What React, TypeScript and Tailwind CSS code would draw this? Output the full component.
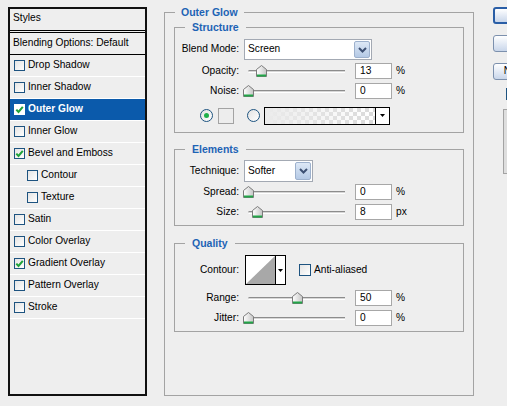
type StyleItem = {
  name: string
  checked?: boolean
  selected?: boolean
  indent?: boolean
}

const styleItems: StyleItem[] = [
  { name: "Drop Shadow" },
  { name: "Inner Shadow" },
  { name: "Outer Glow", checked: true, selected: true },
  { name: "Inner Glow" },
  { name: "Bevel and Emboss", checked: true },
  { name: "Contour", indent: true },
  { name: "Texture", indent: true },
  { name: "Satin" },
  { name: "Color Overlay" },
  { name: "Gradient Overlay", checked: true },
  { name: "Pattern Overlay" },
  { name: "Stroke" },
]

function Check({ checked, selected, big }: { checked?: boolean; selected?: boolean; big?: boolean }) {
  return (
    <span
      className={`flex shrink-0 items-center justify-center border ${big ? "h-[12px] w-[12px]" : "h-[11px] w-[11px]"} ${
        selected ? "border-white bg-white" : "border-[#1d5380] bg-gradient-to-br from-[#e4e4e4] to-white"
      }`}
    >
      {checked && (
        <svg width="9" height="9" viewBox="0 0 9 9">
          <path d="M1.3 4.6 L3.5 7 L7.8 1.8" fill="none" stroke="#1fa33a" strokeWidth="2" />
        </svg>
      )}
    </span>
  )
}

function Radio({ on }: { on?: boolean }) {
  return (
    <span className="flex h-[13px] w-[13px] shrink-0 items-center justify-center rounded-full border border-[#1d5380] bg-gradient-to-br from-[#e2e2e2] to-white">
      {on && <span className="h-[5px] w-[5px] rounded-full bg-[#1fb04a]" />}
    </span>
  )
}

function Label({ children }: { children: React.ReactNode }) {
  return <span className="w-[64px] shrink-0 text-right">{children}</span>
}

function Thumb() {
  return (
    <svg width="11" height="12" viewBox="0 0 11 12">
      <defs>
        <linearGradient id="thumbFill" x1="0" y1="0" x2="1" y2="0">
          <stop offset="0" stopColor="#ffffff" />
          <stop offset="1" stopColor="#c6c6c6" />
        </linearGradient>
      </defs>
      <path d="M0.5 4.5 L5.5 0.5 L10.5 4.5 V11.5 H0.5 Z" fill="url(#thumbFill)" stroke="#7b7b7b" />
      <rect x="1" y="9.5" width="9" height="2" fill="#22a548" />
    </svg>
  )
}

// pos = thumb left offset in px inside the slider box
function Slider({ pos }: { pos: number }) {
  return (
    <div className="relative ml-[5px] flex h-full w-[104px] shrink-0 items-center pl-[4px] pr-[3px]">
      <div className="h-[3px] flex-1 rounded-l-full border-t border-b border-t-[#8c8c8c] border-b-white bg-[#d6d6d6]" />
      <div className="absolute top-1/2 -translate-y-1/2" style={{ left: pos }}>
        <Thumb />
      </div>
    </div>
  )
}

function NumBox({ value, unit }: { value: string; unit: string }) {
  return (
    <>
      <div className="ml-[7px] flex h-[16px] w-[37px] shrink-0 items-center border border-[#a7a7a7] bg-white pl-[4px]">
        {value}
      </div>
      <span className="ml-[4px]">{unit}</span>
    </>
  )
}

function SliderRow({ label, pos, value, unit, className }: { label: string; pos: number; value: string; unit: string; className: string }) {
  return (
    <div className={`flex h-[16px] items-center ${className}`}>
      <Label>{label}</Label>
      <Slider pos={pos} />
      <NumBox value={value} unit={unit} />
    </div>
  )
}

function Chevron() {
  return (
    <svg width="9" height="6" viewBox="0 0 9 6">
      <path d="M1 1 L4.5 4.5 L8 1" fill="none" stroke="#3d5073" strokeWidth="2" />
    </svg>
  )
}

function Arrow() {
  return (
    <svg width="5" height="3" viewBox="0 0 5 3">
      <path d="M0 0 H5 L2.5 3 Z" fill="#000" />
    </svg>
  )
}

function Select({ value, className }: { value: string; className: string }) {
  return (
    <div className={`ml-[5px] flex shrink-0 border border-[#a3a9b3] bg-white ${className}`}>
      <span className="flex flex-1 items-center pl-[3px]">{value}</span>
      <span className="m-[1px] flex w-[16px] items-center justify-center rounded-[2px] border border-[#9db1cd] bg-gradient-to-b from-[#dde8f6] to-[#b4c9e5]">
        <Chevron />
      </span>
    </div>
  )
}

function Group({ title, className, children }: { title: string; className: string; children: React.ReactNode }) {
  return (
    <fieldset className={`border border-[#a3a3a3] ${className}`}>
      <legend className="ml-[10px] px-[7px] text-[10.5px] font-bold leading-[14px] text-[#1d63b5]">{title}</legend>
      {children}
    </fieldset>
  )
}

function Btn({ children, primary, className }: { children: React.ReactNode; primary?: boolean; className?: string }) {
  return (
    <div
      className={`flex h-[17px] w-[76px] items-center justify-center rounded-[3px] bg-gradient-to-b from-white to-[#c9d6ea] ${
        primary ? "border-2 border-[#2a5ea6]" : "border border-[#7c90ad]"
      } ${className ?? ""}`}
    >
      {children}
    </div>
  )
}

export default function App() {
  return (
    <div className="flex h-[406px] w-[507px] items-start overflow-hidden bg-[#eeeeee] pl-[8px] pt-[5px] font-['Liberation_Sans',Arial,sans-serif] text-[10.2px] leading-none text-black">
      {/* styles list */}
      <div className="mt-[2px] h-[389px] w-[139px] shrink-0 overflow-hidden border-2 border-[#111]">
        <div className="flex h-[22px] items-center border-b border-black pl-[3px] pb-[2px]">Styles</div>
        <div className="mt-[1px] flex h-[23px] items-center border-y border-black pl-[3px]">Blending Options: Default</div>
        {styleItems.map((s) => (
          <div
            key={s.name}
            className={`flex h-[22px] items-center border-b border-white ${s.indent ? "pl-[17px]" : "pl-[4px]"} ${
              s.selected ? "bg-[#0b5aab] font-bold text-white" : ""
            }`}
          >
            <Check checked={s.checked} selected={s.selected} />
            <span className="ml-[3px]">{s.name}</span>
          </div>
        ))}
      </div>

      {/* Outer Glow panel */}
      <fieldset className="ml-[17px] w-[310px] shrink-0 border border-[#a3a3a3]">
        <legend className="ml-[10px] px-[6px] text-[10.5px] font-bold leading-[14px] text-[#1d63b5]">Outer Glow</legend>
        <div className="px-[9px] pb-[63px]">
          <Group title="Structure" className="mt-[1px]">
            <div className="pb-[8px] pt-[5px]">
              <div className="flex h-[21px] items-center">
                <Label>Blend Mode:</Label>
                <Select value="Screen" className="h-[21px] w-[128px]" />
              </div>
              <SliderRow label="Opacity:" pos={12} value="13" unit="%" className="mt-[3px]" />
              <SliderRow label="Noise:" pos={-1} value="0" unit="%" className="mt-[4px]" />
              <div className="mt-[8px] flex h-[17px] items-center pl-[25px]">
                <Radio on />
                <span className="ml-[5px] h-[16px] w-[16px] border border-[#a3a3a3] bg-[#ededed]" />
                <span className="ml-[13px]">
                  <Radio />
                </span>
                <div className="ml-[4px] flex h-[18px] w-[126px] border border-black bg-white">
                  <div className="flex-1 bg-[repeating-conic-gradient(#dadada_0%_25%,#ffffff_0%_50%)] bg-[length:8px_8px]">
                    <div className="h-full bg-gradient-to-r from-[#ebebeb] via-[#ebebeb]/50 to-transparent" />
                  </div>
                  <div className="flex w-[14px] items-center justify-center border-l border-black">
                    <Arrow />
                  </div>
                </div>
              </div>
            </div>
          </Group>

          <Group title="Elements" className="mt-[9px]">
            <div className="pb-[5px] pt-[4px]">
              <div className="flex h-[22px] items-center">
                <Label>Technique:</Label>
                <Select value="Softer" className="h-[22px] w-[69px]" />
              </div>
              <SliderRow label="Spread:" pos={-1} value="0" unit="%" className="mt-[2px]" />
              <SliderRow label="Size:" pos={8} value="8" unit="px" className="mt-[4px]" />
            </div>
          </Group>

          <Group title="Quality" className="mt-[10px]">
            <div className="pb-[5px] pt-[5px]">
              <div className="flex h-[30px] items-center">
                <Label>Contour:</Label>
                <div className="ml-[6px] flex h-[30px] w-[41px] shrink-0 border border-black bg-white">
                  <svg width="29" height="28" viewBox="0 0 29 28">
                    <path d="M0 28 L29 0 V28 Z" fill="#a8a8a8" />
                  </svg>
                  <div className="flex flex-1 items-center justify-center border-l border-black">
                    <Arrow />
                  </div>
                </div>
                <span className="ml-[13px]">
                  <Check big />
                </span>
                <span className="ml-[3px]">Anti-aliased</span>
              </div>
              <SliderRow label="Range:" pos={48} value="50" unit="%" className="mt-[5px]" />
              <SliderRow label="Jitter:" pos={-1} value="0" unit="%" className="mt-[4px]" />
            </div>
          </Group>
        </div>
      </fieldset>

      {/* dialog buttons */}
      <div className="ml-[19px] mt-[2px] flex shrink-0 flex-col">
        <Btn primary>OK</Btn>
        <Btn className="mt-[11px]">Cancel</Btn>
        <Btn className="mt-[11px]">New Style...</Btn>
        <div className="ml-[13px] mt-[8px] flex items-center">
          <Check big checked />
          <span className="ml-[3px]">Preview</span>
        </div>
        <div className="ml-[10px] mt-[9px] h-[65px] w-[60px] border border-[#a3a3a3] bg-[#dedede]" />
      </div>
    </div>
  )
}
